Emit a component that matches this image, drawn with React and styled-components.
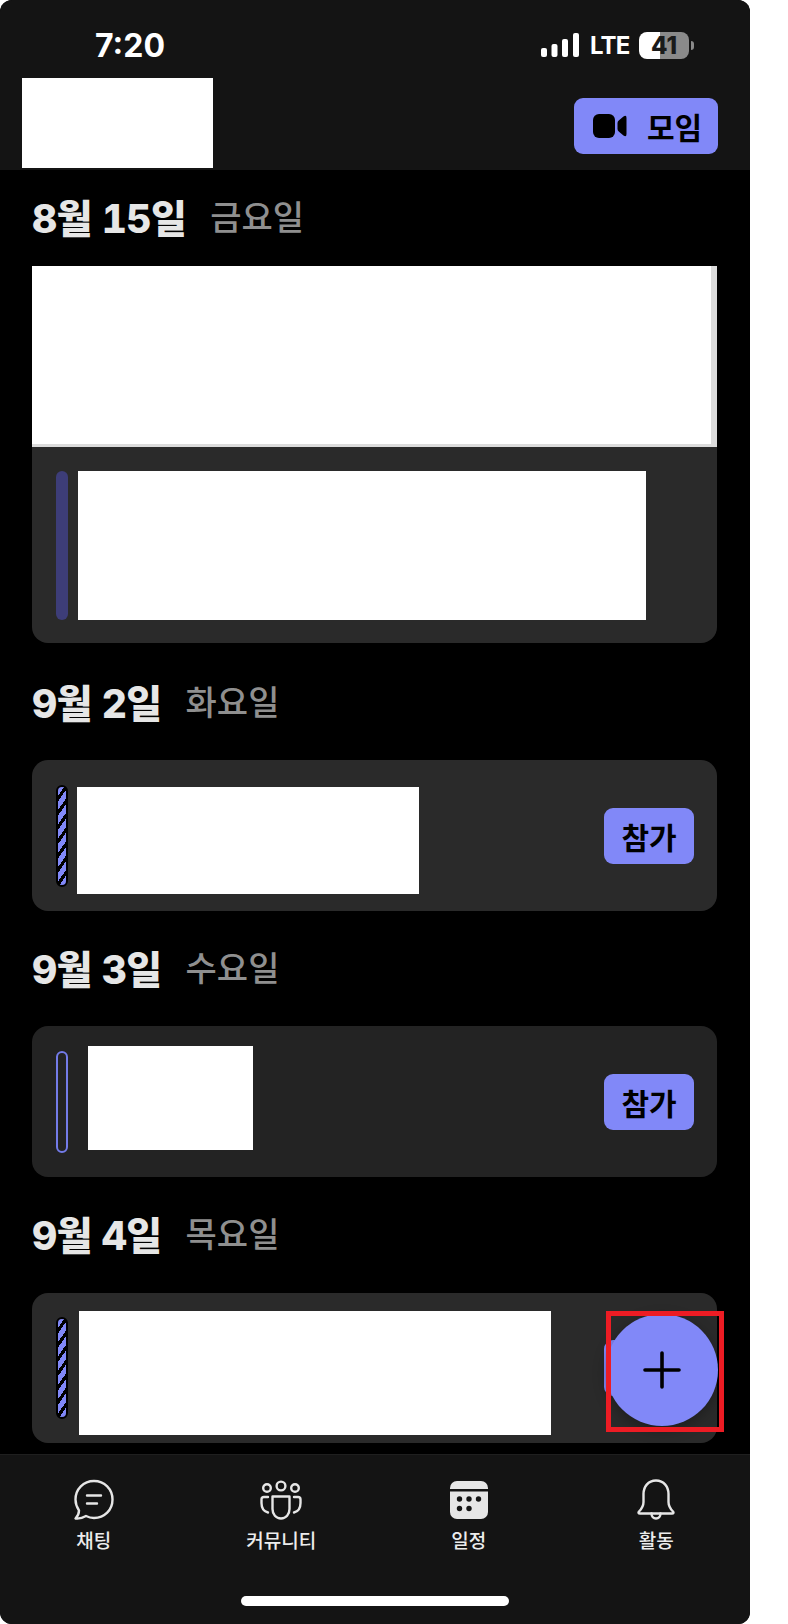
import React from "react";
import styled, { createGlobalStyle, css } from "styled-components";

const Global = createGlobalStyle`
  html, body { margin: 0; padding: 0; background: #fff; }
  * { box-sizing: border-box; }
  body { font-family: Inter, "Noto Sans CJK KR", "Liberation Sans", sans-serif; }
`;

const Phone = styled.div`
  position: relative;
  width: 750px;
  height: 1624px;
  background: #000;
  border-radius: 12px;
  overflow: hidden;
  display: flex;
  flex-direction: column;
`;

const TopArea = styled.header`
  height: 170px;
  flex: none;
  background: #141414;
`;

const StatusBar = styled.div`
  height: 78px;
  padding: 12px 61px 0 95px;
  display: flex;
  align-items: center;
  justify-content: space-between;
  color: #fff;
`;

const Time = styled.span`
  font-size: 32px;
  font-weight: 700;
  letter-spacing: 0;
`;

const StatusGroup = styled.div`
  display: flex;
  align-items: center;
`;

const SignalIcon = styled.svg`
  width: 38px;
  height: 24px;
  display: block;
  margin-right: 11px;
`;

const Lte = styled.span`
  font-size: 24px;
  font-weight: 700;
  width: 39px;
  margin-right: 10px;
  letter-spacing: -0.8px;
  white-space: nowrap;
`;

const Battery = styled.div`
  width: 50px;
  height: 27px;
  border-radius: 8px;
  background: linear-gradient(90deg, #fff 42%, #8a8a8a 42%);
  color: #1a1a1a;
  font-size: 24px;
  font-weight: 800;
  display: flex;
  align-items: center;
  justify-content: center;
  position: relative;
  &::after {
    content: "";
    position: absolute;
    right: -5px;
    top: 9px;
    width: 3px;
    height: 9px;
    border-radius: 0 3px 3px 0;
    background: #8a8a8a;
  }
`;

const HeaderRow = styled.div`
  display: flex;
  justify-content: space-between;
  align-items: flex-start;
  padding: 0 32px 0 22px;
`;

const Redacted = styled.div`
  background: #fff;
  flex: none;
  width: ${(p) => p.$w}px;
  height: ${(p) => p.$h}px;
  margin-top: ${(p) => p.$mt || 0}px;
  margin-bottom: ${(p) => p.$mb || 0}px;
`;

const MeetButton = styled.button`
  width: 144px;
  height: 56px;
  margin-top: 20px;
  border: 0;
  border-radius: 9px;
  background: #8188f8;
  color: #000;
  font: 700 30px "Noto Sans CJK KR", sans-serif;
  display: flex;
  align-items: center;
  padding: 0 0 0 19px;
  gap: 20px;
`;

const CameraIcon = styled.svg`
  width: 34px;
  height: 24px;
  flex: none;
`;

const Content = styled.main`
  flex: 1;
  padding: 0 33px 0 32px;
  display: flex;
  flex-direction: column;
`;

const DateRow = styled.div`
  height: 50px;
  flex: none;
  padding-bottom: 3px;
  margin-top: ${(p) => p.$top}px;
  margin-bottom: ${(p) => p.$bottom}px;
  display: flex;
  align-items: center;
  gap: 24px;
`;

const DateText = styled.span`
  font-size: 39px;
  font-weight: 800;
  color: #e6e6e6;
  letter-spacing: -0.6px;
  font-variant-numeric: tabular-nums;
  font-family: Inter, "Noto Sans CJK KR", sans-serif;
`;

const Weekday = styled.span`
  font-size: 34px;
  font-weight: 500;
  color: #8f8f8f;
  font-family: "Noto Sans CJK KR", sans-serif;
`;

const BannerBlock = styled.div`
  height: 181px;
  background: #fff;
  border-right: 6px solid #dcdcdc;
  border-bottom: 3px solid #dcdcdc;
`;

const EventCard = styled.section`
  display: flex;
  align-items: center;
  height: ${(p) => p.$h}px;
  padding: 0 23px 0 24px;
  background: ${(p) => p.$bg || "#2a2a2a"};
  border-radius: ${(p) => (p.$flat ? "0 0 16px 16px" : "16px")};
`;

const barVariants = {
  solid: css`
    background: #3d3d78;
  `,
  striped: css`
    border: 2px solid #000;
    background: repeating-linear-gradient(125deg, #8188f8 0 5px, #000 5px 8.2px);
  `,
  outline: css`
    border: 2px solid #737be8;
  `,
};

const StatusBarMark = styled.div`
  width: 12px;
  height: ${(p) => p.$h}px;
  flex: none;
  border-radius: 6px;
  margin-right: ${(p) => p.$gap}px;
  ${(p) => barVariants[p.$kind]}
`;

const JoinButton = styled.button`
  margin-left: auto;
  width: 90px;
  height: 56px;
  flex: none;
  border: 0;
  border-radius: 9px;
  background: #8188f8;
  color: #000;
  font: 700 30px "Noto Sans CJK KR", sans-serif;
  padding: 0;
`;

const TabBar = styled.footer`
  height: 170px;
  flex: none;
  background: #141414;
  border-top: 1px solid #1f1f1f;
  display: flex;
  flex-direction: column;
  align-items: center;
`;

const Tabs = styled.nav`
  width: 100%;
  display: grid;
  grid-template-columns: repeat(4, 1fr);
  padding-top: 23px;
`;

const Tab = styled.div`
  display: flex;
  flex-direction: column;
  align-items: center;
  color: #e6e6e6;
`;

const TabIcon = styled.svg`
  width: 44px;
  height: 44px;
  display: block;
`;

const TabLabel = styled.span`
  font: 500 19px/24px "Noto Sans CJK KR", sans-serif;
  margin-top: 6px;
  color: #ececec;
`;

const HomeIndicator = styled.div`
  width: 268px;
  height: 10px;
  border-radius: 5px;
  background: #fff;
  margin-top: 44px;
`;

const Fab = styled.button`
  position: absolute;
  left: 606px;
  top: 1314px;
  width: 112px;
  height: 112px;
  border: 0;
  padding: 0;
  border-radius: 50%;
  background: #8188f8;
  box-shadow: 0 4px 14px rgba(0, 0, 0, 0.3);
  display: flex;
  align-items: center;
  justify-content: center;
`;

const FabIcon = styled.svg`
  width: 40px;
  height: 40px;
`;

const Marker = styled.div`
  position: absolute;
  left: 606px;
  top: 1311px;
  width: 118px;
  height: 121px;
  border: 5px solid #ed1c24;
  pointer-events: none;
`;

const Stroke = { fill: "none", stroke: "currentColor", strokeWidth: 2.4, strokeLinecap: "round", strokeLinejoin: "round" };

export default function App() {
  return (
    <>
      <Global />
      <Phone>
        <TopArea>
          <StatusBar>
            <Time>7:20</Time>
            <StatusGroup>
              <SignalIcon viewBox="0 0 38 24" fill="#fff">
                <rect x="0" y="15" width="6" height="9" rx="2" />
                <rect x="10.5" y="11" width="6" height="13" rx="2" />
                <rect x="21" y="6" width="6" height="18" rx="2" />
                <rect x="32" y="0" width="6" height="24" rx="2" />
              </SignalIcon>
              <Lte>LTE</Lte>
              <Battery>41</Battery>
            </StatusGroup>
          </StatusBar>
          <HeaderRow>
            <Redacted $w={191} $h={90} />
            <MeetButton>
              <CameraIcon viewBox="0 0 34 24" fill="#000">
                <rect x="0" y="0" width="22" height="24" rx="6" />
                <path d="M24.5 9 Q24.5 7.5 26 6.3 L30.5 2.5 Q33.5 0.5 33.5 4 V20 Q33.5 23.5 30.5 21.5 L26 17.7 Q24.5 16.5 24.5 15 Z" />
              </CameraIcon>
              모임
            </MeetButton>
          </HeaderRow>
        </TopArea>

        <Content>
          <DateRow $top={22} $bottom={24}>
            <DateText>8월 15일</DateText>
            <Weekday>금요일</Weekday>
          </DateRow>
          <BannerBlock />
          <EventCard $h={196} $flat>
            <StatusBarMark $kind="solid" $h={149} $gap={10} />
            <Redacted $w={568} $h={149} />
          </EventCard>

          <DateRow $top={34} $bottom={33}>
            <DateText>9월 2일</DateText>
            <Weekday>화요일</Weekday>
          </DateRow>
          <EventCard $h={151}>
            <StatusBarMark $kind="striped" $h={102} $gap={9} />
            <Redacted $w={342} $h={107} $mt={10} />
            <JoinButton>참가</JoinButton>
          </EventCard>

          <DateRow $top={32} $bottom={33}>
            <DateText>9월 3일</DateText>
            <Weekday>수요일</Weekday>
          </DateRow>
          <EventCard $h={151} $bg="#232323">
            <StatusBarMark $kind="outline" $h={102} $gap={20} />
            <Redacted $w={165} $h={104} $mb={7} />
            <JoinButton>참가</JoinButton>
          </EventCard>

          <DateRow $top={32} $bottom={34}>
            <DateText>9월 4일</DateText>
            <Weekday>목요일</Weekday>
          </DateRow>
          <EventCard $h={150}>
            <StatusBarMark $kind="striped" $h={102} $gap={11} />
            <Redacted $w={472} $h={124} $mt={10} />
            <JoinButton>참가</JoinButton>
          </EventCard>
        </Content>

        <TabBar>
          <Tabs>
            <Tab>
              <TabIcon viewBox="0 0 44 44">
                <path {...Stroke} d="M22 3 C11.5 3 3.5 11 3.5 21.5 C3.5 26 5 29.5 7 32.5 C7 35.5 5.5 38.5 3.5 40.5 C8 41 11.5 39.5 14 38 C16.5 39.3 19 40 22 40 C32.5 40 40.5 32 40.5 21.5 C40.5 11 32.5 3 22 3 Z" />
                <path {...Stroke} d="M15 17.5 H29 M15 25.5 H25" />
              </TabIcon>
              <TabLabel>채팅</TabLabel>
            </Tab>
            <Tab>
              <TabIcon viewBox="0 0 44 44">
                <circle {...Stroke} cx="8" cy="10" r="3.8" />
                <circle {...Stroke} cx="22" cy="8" r="4.4" />
                <circle {...Stroke} cx="36" cy="10" r="3.8" />
                <path {...Stroke} d="M13.5 18.5 H30.5 V31 C30.5 36.5 27 40.5 22 40.5 C17 40.5 13.5 36.5 13.5 31 Z" />
                <path {...Stroke} d="M9 19 H5 C3.5 19 2.5 20 2.5 21.5 V25 C2.5 30 5 33.5 9 34.5" />
                <path {...Stroke} d="M35 19 H39 C40.5 19 41.5 20 41.5 21.5 V25 C41.5 30 39 33.5 35 34.5" />
              </TabIcon>
              <TabLabel>커뮤니티</TabLabel>
            </Tab>
            <Tab>
              <TabIcon viewBox="0 0 44 44">
                <path fill="#e6e6e6" d="M3 10 a7 7 0 0 1 7 -7 H34 a7 7 0 0 1 7 7 V11 H3 Z" />
                <path fill="#e6e6e6" d="M3 13.5 H41 V34 a7 7 0 0 1 -7 7 H10 a7 7 0 0 1 -7 -7 Z" />
                <g fill="#141414">
                  <circle cx="12.5" cy="21" r="2.7" />
                  <circle cx="22" cy="21" r="2.7" />
                  <circle cx="31.5" cy="21" r="2.7" />
                  <circle cx="12.5" cy="30.5" r="2.7" />
                  <circle cx="22" cy="30.5" r="2.7" />
                </g>
              </TabIcon>
              <TabLabel>일정</TabLabel>
            </Tab>
            <Tab>
              <TabIcon viewBox="0 0 44 44">
                <path {...Stroke} d="M22 2.5 C14 2.5 9.5 9 9.5 16 V24 C9.5 28 7.5 31 5 33.5 C4 34.5 4.5 35.5 6 35.5 H38 C39.5 35.5 40 34.5 39 33.5 C36.5 31 34.5 28 34.5 24 V16 C34.5 9 30 2.5 22 2.5 Z" />
                <path {...Stroke} d="M17.5 35.5 C17.5 38.5 19.5 40.5 22 40.5 C24.5 40.5 26.5 38.5 26.5 35.5" />
              </TabIcon>
              <TabLabel>활동</TabLabel>
            </Tab>
          </Tabs>
          <HomeIndicator />
        </TabBar>

        <Fab aria-label="추가">
          <FabIcon viewBox="0 0 40 40" fill="none" stroke="#000" strokeWidth="3.6" strokeLinecap="round">
            <path d="M20 3 V37 M3 20 H37" />
          </FabIcon>
        </Fab>
        <Marker />
      </Phone>
    </>
  );
}
